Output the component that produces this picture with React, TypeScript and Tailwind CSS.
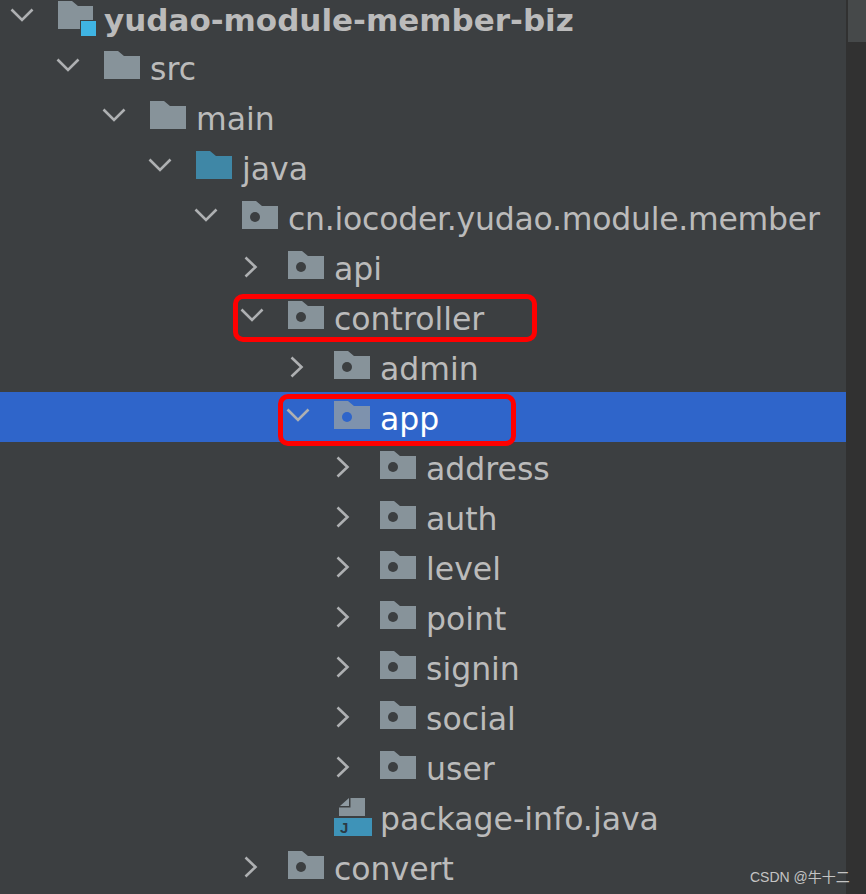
type Kind = "module" | "plain" | "source" | "package" | "java";

type Node = {
  name: string;
  level: number;
  kind: Kind;
  arrow?: "down" | "right";
  selected?: boolean;
};

const nodes: Node[] = [
  { name: "yudao-module-member-biz", level: 0, kind: "module", arrow: "down" },
  { name: "src", level: 1, kind: "plain", arrow: "down" },
  { name: "main", level: 2, kind: "plain", arrow: "down" },
  { name: "java", level: 3, kind: "source", arrow: "down" },
  { name: "cn.iocoder.yudao.module.member", level: 4, kind: "package", arrow: "down" },
  { name: "api", level: 5, kind: "package", arrow: "right" },
  { name: "controller", level: 5, kind: "package", arrow: "down" },
  { name: "admin", level: 6, kind: "package", arrow: "right" },
  { name: "app", level: 6, kind: "package", arrow: "down", selected: true },
  { name: "address", level: 7, kind: "package", arrow: "right" },
  { name: "auth", level: 7, kind: "package", arrow: "right" },
  { name: "level", level: 7, kind: "package", arrow: "right" },
  { name: "point", level: 7, kind: "package", arrow: "right" },
  { name: "signin", level: 7, kind: "package", arrow: "right" },
  { name: "social", level: 7, kind: "package", arrow: "right" },
  { name: "user", level: 7, kind: "package", arrow: "right" },
  { name: "package-info.java", level: 6, kind: "java" },
  { name: "convert", level: 5, kind: "package", arrow: "right" },
];

function Arrow({ dir }: { dir: "down" | "right" }) {
  return (
    <svg width="24" height="24" viewBox="0 0 24 24" fill="none" stroke="#aeb0b2" strokeWidth="2.6">
      {dir === "down" ? <path d="M1.5 3.5 L12 14 L22.5 3.5" /> : <path d="M5.5 1.5 L15.5 11 L5.5 20.5" />}
    </svg>
  );
}

function FolderIcon({ kind, selected }: { kind: Kind; selected?: boolean }) {
  if (kind === "module") {
    return (
      <svg width="40" height="38" viewBox="0 0 40 38" className="mt-[3px]">
        <path d="M0 0 H14 L20 5 H35 V19 H22 V28 H0 Z" fill="#87939a" />
        <rect x="23" y="20" width="15" height="15" fill="#3fb4e3" />
      </svg>
    );
  }
  if (kind === "java") {
    return (
      <svg width="40" height="40" viewBox="0 0 40 40">
        <path d="M6 8 L15 0 V8 Z" fill="#8f9ba2" />
        <path d="M16.5 0 H31 V18 H5 V9.5 H16.5 Z" fill="#87939a" />
        <rect x="0" y="20" width="38" height="18" fill="#3e93b8" />
        <text x="6" y="35" fontSize="15" fontWeight="700" fill="#2b3a45" className="font-['Liberation_Sans',sans-serif]">
          J
        </text>
      </svg>
    );
  }
  const fill = kind === "source" ? "#3f87a6" : selected ? "#7e92ad" : "#87939a";
  return (
    <svg width="36" height="28" viewBox="0 0 36 28" className="mt-[3px]">
      <path d="M0 0 H14 L20 5 H36 V28 H0 Z" fill={fill} />
      {kind === "package" && <circle cx="13" cy="16" r="5" fill={selected ? "#2f65ca" : "#3c3f41"} />}
    </svg>
  );
}

function Row({ node }: { node: Node }) {
  const isModule = node.kind === "module";
  return (
    <div
      className={`flex items-center h-[50px] pt-[2px] ${node.selected ? "bg-[#2f65ca] text-white" : "text-[#bbbbbb]"}`}
      style={{ paddingLeft: 10 + node.level * 46 }}
    >
      <div className="w-[48px] shrink-0 flex items-center">{node.arrow && <Arrow dir={node.arrow} />}</div>
      <div className="w-[46px] h-[40px] shrink-0 flex items-start">
        <FolderIcon kind={node.kind} selected={node.selected} />
      </div>
      <span
        className={`leading-none whitespace-nowrap translate-y-[2px] ${isModule ? "text-[31px] font-bold" : "text-[31.5px]"} ${node.level === 4 ? "tracking-[-0.25px]" : ""}`}
      >
        {node.name}
      </span>
    </div>
  );
}

export default function App() {
  return (
    <div className="relative flex w-[866px] h-[894px] overflow-hidden bg-[#3c3f41] font-['DejaVu_Sans',sans-serif]">
      <div className="w-[846px] shrink-0 -mt-[8px]">
        {nodes.map((node) => (
          <Row key={node.name} node={node} />
        ))}
      </div>

      {/* scrollbar */}
      <div className="w-[20px] bg-[#313131] pl-[2px]">
        <div className="h-[42px] bg-[#46494a]" />
      </div>

      {/* red marks drawn over the screenshot */}
      <div className="absolute left-[233px] top-[294px] w-[304px] h-[48px] border-[5px] border-[#ff0000] rounded-[10px]" />
      <div className="absolute left-[278px] top-[394px] w-[238px] h-[52px] border-[5px] border-[#ff0000] rounded-[10px]" />

      <div className="absolute left-[750px] top-[868px] text-[14px] leading-[18px] text-[#c4c4c4] font-['Liberation_Sans','Noto_Sans_CJK_SC',sans-serif]">
        CSDN @牛十二
      </div>
    </div>
  );
}
